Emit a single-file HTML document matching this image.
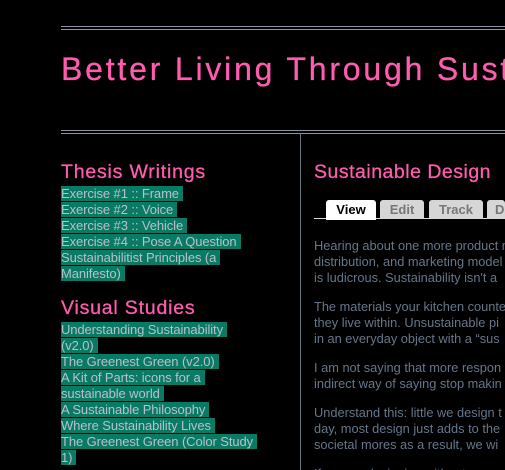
<!DOCTYPE html>
<html><head><meta charset="utf-8"><style>
html,body{margin:0;padding:0;background:#000;width:505px;height:470px;overflow:hidden;position:relative;font-family:"Liberation Sans",Arial,sans-serif}
.hl{position:absolute;left:61px;right:0;height:1px;background:#8a93a3}
.title{position:absolute;left:61px;top:51px;width:444px;overflow:hidden;font-size:32px;letter-spacing:2.8px;color:#ff5cb0;white-space:nowrap;-webkit-text-stroke:0.3px #ff5cb0}
.vl{position:absolute;left:300px;top:133px;width:1px;height:337px;background:#6a7280}
h2{position:absolute;margin:0;font-weight:normal;color:#ff5cb0;font-size:19.5px;letter-spacing:0.8px;white-space:nowrap;-webkit-text-stroke:0.3px #ff5cb0}
.links{position:absolute;left:61px;font-size:13px;line-height:16px;width:200px;letter-spacing:-0.1px}
.links span{background:#0b7a64;color:#b4c2ca;padding-right:4px;box-decoration-break:clone;-webkit-box-decoration-break:clone}
.tab{position:absolute;top:200px;height:19px;background:#d6d6d6;border-radius:3px 3px 0 0;font-size:13px;font-weight:bold;color:#777;line-height:20px;text-align:center}
.main{position:absolute;left:314px;top:238px;width:191px;height:232px;overflow:hidden;font-size:12.8px;line-height:16px;color:#66768a;white-space:nowrap}
.main p{margin:0 0 13px 0}
</style></head><body>
<div class="hl" style="top:26px"></div><div class="hl" style="top:29px"></div>
<div class="title">Better Living Through Sustainability</div>
<div class="hl" style="top:130px"></div><div class="hl" style="top:133px"></div>
<div class="vl"></div>
<h2 style="left:61px;top:161px">Thesis Writings</h2>
<div class="links" style="top:186px">
<span>Exercise #1 :: Frame </span><br><span>Exercise #2 :: Voice </span><br><span>Exercise #3 :: Vehicle </span><br><span>Exercise #4 :: Pose A Question </span><br><span>Sustainabilitist Principles (a</span><br><span>Manifesto) </span>
</div>
<h2 style="left:61px;top:297px">Visual Studies</h2>
<div class="links" style="top:322px">
<span>Understanding Sustainability</span><br><span>(v2.0) </span><br><span>The Greenest Green (v2.0) </span><br><span>A Kit of Parts: icons for a</span><br><span>sustainable world </span><br><span>A Sustainable Philosophy </span><br><span>Where Sustainability Lives </span><br><span>The Greenest Green (Color Study</span><br><span>1) </span>
</div>
<h2 style="left:314px;top:161px;letter-spacing:0.5px">Sustainable Design</h2>
<div style="position:absolute;left:314px;right:0;top:218px;height:1px;background:#ddd"></div>
<div class="tab" style="left:326px;width:50px;background:#fff;color:#000;height:20px">View</div>
<div class="tab" style="left:380px;width:44px">Edit</div>
<div class="tab" style="left:429px;width:54px">Track</div>
<div class="tab" style="left:487px;width:18px;text-align:left;padding-left:8px;box-sizing:border-box">D</div>
<div class="main">
<p>Hearing about one more product made<br>distribution, and marketing model<br>is ludicrous. Sustainability isn't a</p>
<p>The materials your kitchen counter<br>they live within. Unsustainable pi<br>in an everyday object with a “sus</p>
<p>I am not saying that more respon<br>indirect way of saying stop makin</p>
<p>Understand this: little we design t<br>day, most design just adds to the<br>societal mores as a result, we wi</p>
<p>If we are designing without</p>
</div>
</body></html>
